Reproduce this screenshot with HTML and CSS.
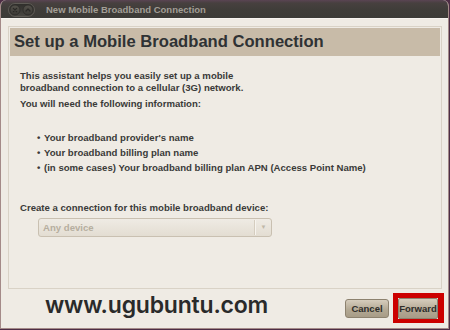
FILE: index.html
```html
<!DOCTYPE html>
<html>
<head>
<meta charset="utf-8">
<link rel="stylesheet" href="styles.css">
</head>
<body>
<div class="window">
  <div class="titlebar">
    <div class="wbtns">
      <svg width="27" height="14" viewBox="0 0 27 14">
        <defs>
          <linearGradient id="pill" x1="0" y1="0" x2="0" y2="1">
            <stop offset="0" stop-color="#2f2e2b"/>
            <stop offset="1" stop-color="#4a4843"/>
          </linearGradient>
          <linearGradient id="btn" x1="0" y1="0" x2="0" y2="1">
            <stop offset="0" stop-color="#55524c"/>
            <stop offset="1" stop-color="#3b3935"/>
          </linearGradient>
        </defs>
        <rect x="0.5" y="0.5" width="26" height="13" rx="6.5" fill="url(#pill)" stroke="#5e5b55"/>
        <circle cx="7" cy="7" r="5" fill="url(#btn)" stroke="#2c2b28" stroke-width="0.8"/>
        <circle cx="20" cy="7" r="5" fill="url(#btn)" stroke="#2c2b28" stroke-width="0.8"/>
        <path d="M5.4 5.4 L8.6 8.6 M8.6 5.4 L5.4 8.6" stroke="#2a2926" stroke-width="1.3" stroke-linecap="round"/>
        <path d="M18 8 L20 6 L22 8" fill="none" stroke="#2a2926" stroke-width="1.3" stroke-linecap="round" stroke-linejoin="round"/>
      </svg>
    </div>
    <span class="title">New Mobile Broadband Connection</span>
  </div>
  <div class="client">
    <div class="frame">
      <div class="header">Set up a Mobile Broadband Connection</div>
      <div class="content">
        <p class="intro">This assistant helps you easily set up a mobile<br>broadband connection to a cellular (3G) network.</p>
        <p class="need">You will need the following information:</p>
        <ul class="list">
          <li>Your broadband provider's name</li>
          <li>Your broadband billing plan name</li>
          <li>(in some cases) Your broadband billing plan APN (Access Point Name)</li>
        </ul>
        <p class="create">Create a connection for this mobile broadband device:</p>
        <div class="combo">
          <span class="combo-text">Any device</span>
          <span class="combo-sep"></span>
          <span class="combo-arrow">▼</span>
        </div>
      </div>
    </div>
    <div class="footer">
      <span class="watermark">www.ugubuntu.com</span>
      <div class="buttons">
        <button class="btn cancel">Cancel</button>
        <span class="mark"><button class="btn fwd">Forward</button></span>
      </div>
    </div>
  </div>
</div>
</body>
</html>
```

FILE: styles.css
```css
html, body {
  margin: 0;
  padding: 0;
}
body {
  width: 450px;
  height: 330px;
  background: #4e2d45;
  font-family: "Liberation Sans", Arial, sans-serif;
  overflow: hidden;
}
.window {
  width: 447px;
  height: 328px;
  display: flex;
  flex-direction: column;
  background: #efebe4;
  border: 1px solid #a48a88;
  border-top: none;
  border-radius: 6px 6px 0 0;
  overflow: hidden;
}
.titlebar {
  height: 18px;
  flex: none;
  display: flex;
  align-items: center;
  background: linear-gradient(#5a4453 0, #47403f 3px, #3f3d39 10px, #3c3b37 100%);
  border-bottom: 1px solid #f6f4f0;
}
.wbtns {
  display: flex;
  margin-left: 7px;
  margin-top: 1px;
  width: 27px;
  height: 14px;
}
.title {
  margin-left: 11px;
  font-size: 9.5px;
  font-weight: bold;
  color: #a29e96;
}
.client {
  flex: 1;
  display: flex;
  flex-direction: column;
  padding: 7px 6px 0 7px;
}
.frame {
  height: 259px;
  border: 1px solid #d9d2c6;
  padding: 1px;
  display: flex;
  flex-direction: column;
}
.header {
  height: 28px;
  line-height: 28px;
  background: #c8bba8;
  padding-left: 4px;
  font-size: 16.6px;
  font-weight: bold;
  color: #2f3234;
}
.content {
  padding: 14px 0 0 10px;
  font-size: 9.6px;
  font-weight: bold;
  color: #3a3a38;
}
.content p {
  margin: 0;
}
.intro {
  line-height: 11.5px;
}
.content .need {
  margin-top: 5px;
  line-height: 11.5px;
}
.list {
  list-style: none;
  margin: 20.5px 0 0 0;
  padding: 0;
}
.list li {
  height: 15px;
  line-height: 15px;
  padding-left: 17px;
}
.list li::before {
  content: "•";
  display: inline-block;
  width: 7px;
}
.content .create {
  margin-top: 27px;
  line-height: 11.5px;
}
.combo {
  margin: 4px 0 0 18px;
  width: 232px;
  height: 17px;
  border: 1px solid #c9c0b1;
  border-radius: 3px;
  background: linear-gradient(#efebe4, #e3ddd2);
  display: flex;
  align-items: center;
}
.combo-text {
  flex: 1;
  padding-left: 4px;
  color: #b6ae9f;
  font-size: 9.6px;
}
.combo-sep {
  width: 1px;
  height: 15px;
  background: #d5cdbf;
  border-right: 1px solid #f7f4ef;
}
.combo-arrow {
  width: 15px;
  text-align: center;
  font-size: 6px;
  color: #bfb7a8;
}
.footer {
  flex: 1;
  display: flex;
  align-items: center;
  justify-content: space-between;
  padding-bottom: 1px;
}
.watermark {
  margin-left: 37px;
  margin-top: -6px;
  font-family: Inter, "DejaVu Sans", sans-serif;
  font-weight: 600;
  font-size: 23px;
  letter-spacing: -0.2px;
  color: #2a2a2a;
}
.buttons {
  display: flex;
  align-items: center;
  gap: 4px;
  margin-right: -2px;
}
.btn {
  margin: 0;
  padding: 0;
  height: 19px;
  border: 1px solid #8d826f;
  border-radius: 3px;
  background: linear-gradient(#d6cdbd, #b2a792 60%, #a89c87);
  font-family: "Liberation Sans", Arial, sans-serif;
  font-size: 9.5px;
  font-weight: bold;
  color: #2e2d2a;
}
.cancel {
  width: 44px;
}
.mark {
  display: flex;
  border-style: solid;
  border-color: #cc0000;
  border-width: 5px 6px 4px 5px;
}
.fwd {
  width: 40px;
  height: 21px;
  border-radius: 2px;
}
```
